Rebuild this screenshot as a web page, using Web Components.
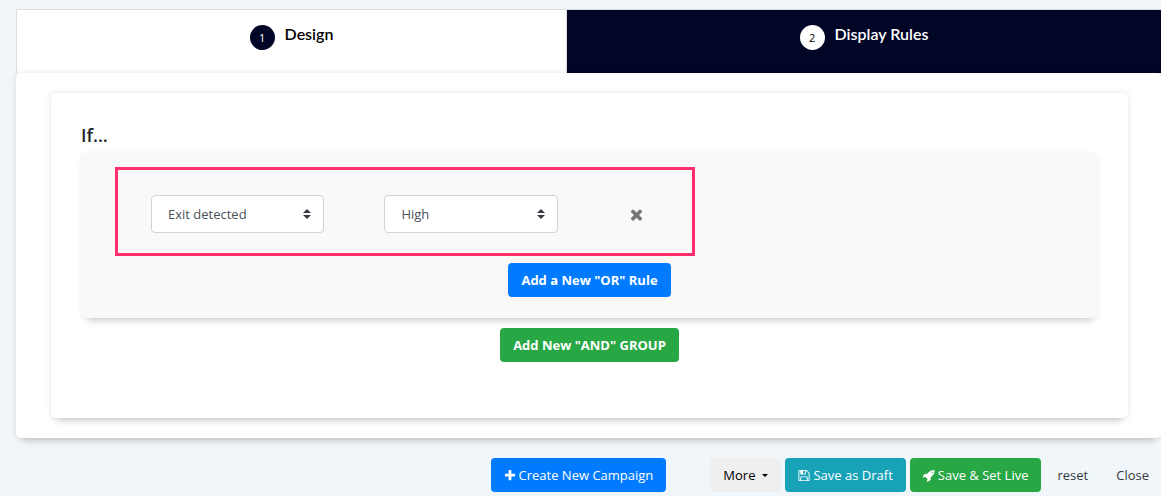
<!DOCTYPE html>
<html lang="en">
<head>
<meta charset="utf-8">
<title>Campaign display rules</title>
<style>
  html { background: #f1f6fb; }
  body { margin: 0; font: 13px/20px "Open Sans", "Noto Sans", sans-serif; color: #343a40; }
</style>
</head>
<body>
<campaign-editor></campaign-editor>

<script>
const define = (name, html, setup) => {
  const template = document.createElement('template');
  template.innerHTML = html;
  customElements.define(name, class extends HTMLElement {
    constructor() {
      super();
      this.attachShadow({ mode: 'open' }).append(template.content.cloneNode(true));
    }
    connectedCallback() { if (setup) setup(this, this.shadowRoot); }
  });
};

const ICONS = {
  plus: 'M1600 736v192q0 40-28 68t-68 28h-416v416q0 40-28 68t-68 28h-192q-40 0-68-28t-28-68v-416h-416q-40 0-68-28t-28-68v-192q0-40 28-68t68-28h416v-416q0-40 28-68t68-28h192q40 0 68 28t28 68v416h416q40 0 68 28t28 68z',
  times: 'M1490 1322q0 40-28 68l-136 136q-28 28-68 28t-68-28l-294-294-294 294q-28 28-68 28t-68-28l-136-136q-28-28-28-68t28-68l294-294-294-294q-28-28-28-68t28-68l136-136q28-28 68-28t68 28l294 294 294-294q28-28 68-28t68 28l136 136q28 28 28 68t-28 68l-294 294 294 294q28 28 28 68z',
  floppy: 'M512 1536h768v-384h-768v384zm896 0h128v-896q0-14-10-38.500t-20-34.500l-281-281q-10-10-34-20t-39-10v416q0 40-28 68t-68 28h-576q-40 0-68-28t-28-68v-416h-128v1280h128v-416q0-40 28-68t68-28h832q40 0 68 28t28 68v416zm-384-928v-320q0-13-9.500-22.500t-22.500-9.500h-192q-13 0-22.500 9.500t-9.500 22.500v320q0 13 9.500 22.500t22.500 9.500h192q13 0 22.500-9.500t9.500-22.500zm640 32v928q0 40-28 68t-68 28h-1344q-40 0-68-28t-28-68v-1344q0-40 28-68t68-28h928q40 0 88 20t76 48l280 280q28 28 48 76t20 88z',
  rocket: 'M1440 448q0-40-28-68t-68-28-68 28-28 68 28 68 68 28 68-28 28-68zm224-288q0 249-75.500 430.500t-253.500 360.500q-81 80-195 176l-20 379q-2 16-16 26l-384 224q-7 4-16 4-12 0-23-9l-64-64q-13-14-8-32l85-276-281-281-276 85q-3 1-9 1-14 0-23-9l-64-64q-17-19-5-39l224-384q10-14 26-16l379-20q96-114 176-195 188-187 358-258t431-71q14 0 24 9.500t10 22.500z'
};

define('fa-icon', `
  <style>
    :host { display: inline-flex; }
    svg { width: var(--icon-width, 12px); height: var(--icon-size, 13px); fill: currentColor; }
  </style>
  <svg viewBox="128 0 1536 1792" aria-hidden="true"><path/></svg>`,
  (el, root) => root.querySelector('path').setAttribute('d', ICONS[el.getAttribute('name')]));

define('step-tab', `
  <style>
    :host { display: block; background: #fff; color: #000; --dot: #020626; --num: #fff; }
    :host([active]) { background: #020626; color: #fff; --dot: #fff; --num: #000; }
    a { display: flex; justify-content: center; gap: 10px; padding: 15px 0 23px; color: inherit; text-decoration: none; }
    .num { width: 25px; height: 25px; border-radius: 50%; background: var(--dot); color: var(--num);
      font-size: 11px; line-height: 25px; text-align: center; }
    .name { font: 600 16px/18px Lato, "Open Sans", sans-serif; }
  </style>
  <a href="#"><span class="num"></span><span class="name"><slot></slot></span></a>`,
  (el, root) => {
    root.querySelector('.num').textContent = el.getAttribute('step');
    if (el.hasAttribute('active')) root.querySelector('a').setAttribute('aria-current', 'step');
  });

define('app-button', `
  <style>
    :host { display: inline-block; }
    button { display: flex; align-items: center; gap: 3px; height: 34px; margin: 0; padding: 0 var(--pad, 13px); border: 0; border-radius: 4px;
      background: var(--bg, transparent); color: var(--fg, #fff); font: inherit; font-weight: var(--weight, 500); white-space: nowrap; cursor: pointer; }
    :host([kind=primary]) { --bg: #007bff; }
    :host([kind=success]) { --bg: #28a745; }
    :host([kind=info]) { --bg: #17a2b8; }
    :host([kind=light]) { --bg: #efefef; --fg: #000; --weight: 400; }
    :host([kind=plain]) { --fg: #343a40; --weight: 400; --pad: 12px; }
    :host([strong]) { --weight: 700; }
    .caret { display: none; margin-left: 4px; border: 3px solid transparent; border-top-color: currentColor; border-bottom: 0; }
    :host([menu]) .caret { display: block; }
    :host(:not([menu])) .caret { display: none; }
  </style>
  <button type="button"><slot></slot><span class="caret"></span></button>`);

define('rule-select', `
  <style>
    :host { display: block; }
    select { appearance: none; display: block; box-sizing: border-box; width: 100%; height: 38px; margin: 0; padding: 0 28px 0 16px;
      border: 1px solid #ced4da; border-radius: 4px; color: #495057; font: inherit;
      background: #fff url("data:image/svg+xml,%3Csvg xmlns='http://www.w3.org/2000/svg' viewBox='0 0 4 5'%3E%3Cpath fill='%23343a40' d='M2 0L0 2h4zm0 5L0 3h4z'/%3E%3C/svg%3E") no-repeat right 12px center / 8px 10px; }
  </style>
  <select><option></option></select>`,
  (el, root) => {
    root.querySelector('select').setAttribute('aria-label', el.getAttribute('label'));
    root.querySelector('option').textContent = el.getAttribute('value');
  });

define('rule-row', `
  <style>
    :host { display: grid; grid-template-columns: 17fr 17fr 4fr; column-gap: 60px; align-items: center; box-sizing: border-box;
      width: 57%; min-width: 480px; margin-left: 34px; padding: 25px 33px 20px; border: 3px solid #ff2e6d; }
    button { justify-self: start; display: flex; margin: 0; padding: 0 0 0 11px; border: 0; background: none; color: #777; cursor: pointer;
      --icon-width: 15px; --icon-size: 17px; }
  </style>
  <rule-select label="Condition" value="Exit detected"></rule-select>
  <rule-select label="Sensitivity" value="High"></rule-select>
  <button type="button" aria-label="Remove rule"><fa-icon name="times"></fa-icon></button>`);

define('rule-group', `
  <style>
    :host { display: flex; flex-direction: column; padding: 13px 0 21px; border-radius: 5px; background: #f9f9f9;
      box-shadow: 0 8px 8px -6px rgba(0,0,0,.2), 0 0 6px rgba(0,0,0,.06); }
    app-button { align-self: center; margin-top: 7px; }
  </style>
  <rule-row></rule-row>
  <app-button kind="primary" strong>Add a New "OR" Rule</app-button>`);

define('shadow-card', `
  <style>
    :host { display: block; border-radius: 5px; background: #fff;
      box-shadow: 0 8px 8px -6px rgba(0,0,0,.2), 0 0 6px rgba(0,0,0,.1); }
  </style>
  <slot></slot>`);

define('editor-footer', `
  <style>
    :host { display: flex; justify-content: flex-end; gap: 4px; padding: 20px 0 4px; }
    .create { margin-right: 40px; }
  </style>
  <app-button class="create" kind="primary"><fa-icon name="plus"></fa-icon>Create New Campaign</app-button>
  <app-button kind="light" menu>More</app-button>
  <app-button kind="info"><fa-icon name="floppy"></fa-icon>Save as Draft</app-button>
  <app-button kind="success"><fa-icon name="rocket"></fa-icon>Save &amp; Set Live</app-button>
  <app-button kind="plain">reset</app-button>
  <app-button kind="plain">Close</app-button>`);

define('campaign-editor', `
  <style>
    :host { display: block; padding: 9px 0 0 16px; }
    nav { display: grid; grid-template-columns: 25fr 27fr; border: solid #d9dde0; border-width: 1px 0 0 1px; }
    nav step-tab:first-child { border-right: 1px solid #d9dde0; }
    .panel { position: relative; padding: 20px 33px 20px 35px; }
    .card { padding: 30px 30px 56px; }
    h2 { margin: 0; padding-bottom: 7px; font: 600 18px/24px "Open Sans", sans-serif; color: #212529; }
    .and { display: flex; justify-content: center; padding-top: 10px; }
  </style>
  <nav>
    <step-tab step="1">Design</step-tab>
    <step-tab step="2" active>Display Rules</step-tab>
  </nav>
  <shadow-card class="panel">
    <shadow-card class="card">
      <h2>If...</h2>
      <rule-group></rule-group>
      <div class="and"><app-button kind="success" strong>Add New "AND" GROUP</app-button></div>
    </shadow-card>
  </shadow-card>
  <editor-footer></editor-footer>`);
</script>
</body>
</html>
